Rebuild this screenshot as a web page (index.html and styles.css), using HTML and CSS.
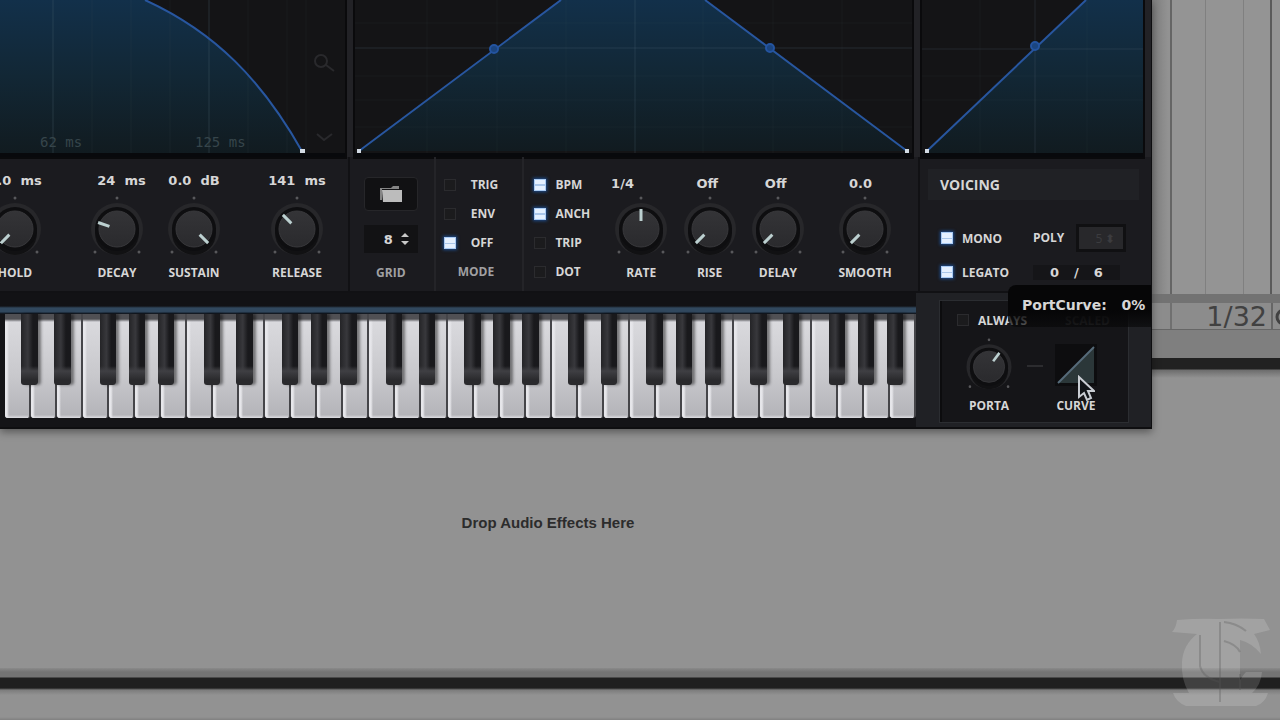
FILE: index.html
```html
<!DOCTYPE html>
<html lang="en">
<head>
  <meta charset="UTF-8" />
  <meta name="viewport" content="width=device-width, initial-scale=1.0" />
  <title>Synth</title>
  <link rel="stylesheet" href="styles.css">
</head>
<body>
  <!-- shared shapes -->
  <svg class="defs" width="0" height="0" aria-hidden="true">
    <defs>
      <linearGradient id="fill" x1="0" y1="0" x2="0" y2="1">
        <stop offset="0" stop-color="#12304a" />
        <stop offset="0.5" stop-color="#122735" />
        <stop offset="1" stop-color="#111b20" />
      </linearGradient>
      <linearGradient id="cap" x1="0" y1="0" x2="0" y2="1">
        <stop offset="0" stop-color="#343437" />
        <stop offset="1" stop-color="#2a2a2d" />
      </linearGradient>
      <symbol id="dial" viewBox="-30 -33 60 62">
        <circle r="26" fill="#27272a" />
        <circle cy="4" r="22" fill="#111113" />
        <circle r="22" fill="#0e0e10" />
        <circle r="18" fill="url(#cap)" stroke="#38383b" />
        <circle cy="-31" r="1.5" fill="#58585b" />
        <circle cx="-22" cy="23" r="1.5" fill="#58585b" />
        <circle cx="22" cy="23" r="1.5" fill="#58585b" />
      </symbol>
    </defs>
  </svg>

  <div class="workspace">
    <main class="plugin">
      <div class="displays">
        <svg class="display" viewBox="0 0 345 153" preserveAspectRatio="none">
          <path d="M0 0H145C215 32 262 80 303 153H0Z" fill="url(#fill)" />
          <path d="M53 0V153M209 0V153" stroke="#4b6470" stroke-opacity=".35" />
          <path d="M92 0V153M131 0V153M170 0V153M248 0V153M287 0V153M306 0V153" stroke="#4b6470" stroke-opacity=".1" />
          <path class="trace" d="M145 0C215 32 262 80 303 153" />
          <rect x="300" y="149" width="5" height="4" fill="#d3dbe4" />
          <g fill="none" stroke="#29292c" stroke-width="2">
            <circle cx="321" cy="61" r="6" />
            <path d="M326 65l8 6M317 134l7 6 8-6" />
          </g>
          <g class="ticks">
            <text x="40" y="147">62 ms</text>
            <text x="195" y="147">125 ms</text>
          </g>
        </svg>
        <svg class="display" viewBox="0 0 557 153" preserveAspectRatio="none">
          <path d="M4 151L206 0H350L552 151Z" fill="url(#fill)" />
          <path d="M0 48H557M280 0V153" stroke="#5d747e" stroke-opacity=".25" />
          <path d="M0 23H557M0 76H557M0 100H557M0 127H557M72 0V153M142 0V153M211 0V153M348 0V153M418 0V153M487 0V153" stroke="#5d747e" stroke-opacity=".07" />
          <path class="trace" d="M4 151L206 0M350 0L552 151" />
          <g class="handle">
            <circle cx="139" cy="49" r="4" />
            <circle cx="415" cy="48" r="4" />
          </g>
          <path d="M2 149h4v4h-4zM550 149h4v4h-4z" fill="#d3dbe4" />
        </svg>
        <svg class="display" viewBox="0 0 221 153" preserveAspectRatio="none">
          <path d="M5 151L164 0H221V153H5Z" fill="url(#fill)" />
          <path d="M0 49H221M113 0V153" stroke="#5d747e" stroke-opacity=".22" />
          <path d="M0 76H221M0 100H221M58 0V153M165 0V153" stroke="#5d747e" stroke-opacity=".07" />
          <path class="trace" d="M5 151L164 0" />
          <circle class="handle" cx="113" cy="46" r="4" />
          <path d="M3 149h4v4h-4z" fill="#d3dbe4" />
        </svg>
      </div>

      <div class="controls">
        <section class="envelope">
          <label class="knob"><span class="value">0.0  ms</span>
            <span class="dial"><svg><use href="#dial" /></svg><svg viewBox="-30 -33 60 62"><path class="needle" transform="rotate(-135)" d="M0-8V-20" /></svg><input type="range" value="0"></span>
            <span class="name">HOLD</span></label>
          <label class="knob"><span class="value">  24  ms</span>
            <span class="dial"><svg><use href="#dial" /></svg><svg viewBox="-30 -33 60 62"><path class="needle" transform="rotate(-71)" d="M0-8V-20" /></svg><input type="range" value="24"></span>
            <span class="name">DECAY</span></label>
          <label class="knob"><span class="value">0.0  dB</span>
            <span class="dial"><svg><use href="#dial" /></svg><svg viewBox="-30 -33 60 62"><path class="needle" transform="rotate(135)" d="M0-8V-20" /></svg><input type="range" value="100"></span>
            <span class="name">SUSTAIN</span></label>
          <label class="knob"><span class="value">141  ms</span>
            <span class="dial"><svg><use href="#dial" /></svg><svg viewBox="-30 -33 60 62"><path class="needle" transform="rotate(-45)" d="M0-8V-20" /></svg><input type="range" value="33"></span>
            <span class="name">RELEASE</span></label>
        </section>

        <section class="lfo">
          <div class="grid-size">
            <button class="folder" aria-label="Open shape">
              <svg width="24" height="18" viewBox="0 0 24 18"><path d="M1 3h11l2-2h6v3H3v11H1z" fill="#858585" /><path d="M3 5h20v12H4z" fill="#bcbcbc" /></svg>
            </button>
            <div class="stepper">
              <input id="grid" type="text" value="8">
              <svg width="10" height="16" viewBox="0 0 10 16" fill="#c8c8c8"><path d="M1 6l4-4 4 4zM1 10h8l-4 4z" /></svg>
            </div>
            <label class="name dim" for="grid">GRID</label>
          </div>
          <div class="mode">
            <label class="check"><input type="radio" name="mode">TRIG</label>
            <label class="check"><input type="radio" name="mode">ENV</label>
            <label class="check"><input type="radio" name="mode" checked>OFF</label>
            <span class="name dim">MODE</span>
          </div>
          <div class="sync">
            <label class="check"><input type="checkbox" checked>BPM</label>
            <label class="check"><input type="checkbox" checked>ANCH</label>
            <label class="check"><input type="checkbox">TRIP</label>
            <label class="check"><input type="checkbox">DOT</label>
          </div>
          <div class="lfo-knobs">
            <label class="knob"><span class="value start">1/4</span>
              <span class="dial"><svg><use href="#dial" /></svg><svg viewBox="-30 -33 60 62"><path class="needle" d="M0-8V-20" /></svg><input type="range" value="50"></span>
              <span class="name">RATE</span></label>
            <label class="knob"><span class="value">Off </span>
              <span class="dial"><svg><use href="#dial" /></svg><svg viewBox="-30 -33 60 62"><path class="needle" transform="rotate(-135)" d="M0-8V-20" /></svg><input type="range" value="0"></span>
              <span class="name">RISE</span></label>
            <label class="knob"><span class="value">Off </span>
              <span class="dial"><svg><use href="#dial" /></svg><svg viewBox="-30 -33 60 62"><path class="needle" transform="rotate(-135)" d="M0-8V-20" /></svg><input type="range" value="0"></span>
              <span class="name">DELAY</span></label>
            <label class="knob"><span class="value">0.0  </span>
              <span class="dial"><svg><use href="#dial" /></svg><svg viewBox="-30 -33 60 62"><path class="needle" transform="rotate(-135)" d="M0-8V-20" /></svg><input type="range" value="0"></span>
              <span class="name">SMOOTH</span></label>
          </div>
        </section>

        <section class="voicing">
          <h2>VOICING</h2>
          <div class="voice-row">
            <label class="check"><input type="checkbox" checked>MONO</label>
            <label class="name" for="poly">POLY</label>
            <input class="poly" id="poly" type="text" value="5 ⬍" disabled>
          </div>
          <div class="voice-row">
            <label class="check"><input type="checkbox" checked>LEGATO</label>
            <div class="voices"><span>0</span><span>/</span><span>6</span></div>
          </div>
        </section>
      </div>

      <div class="bottom">
        <div class="keyboard" id="keyboard"></div>
        <section class="porta">
          <div class="porta-top">
            <label class="check"><input type="checkbox">ALWAYS</label>
            <button class="scaled">SCALED</button>
          </div>
          <div class="porta-row">
            <label class="knob small">
              <span class="dial"><svg><use href="#dial" /></svg><svg viewBox="-30 -33 60 62"><path class="needle" transform="rotate(37)" d="M0-8V-20" /></svg><input type="range" value="63"></span>
              <span class="name">PORTA</span></label>
            <span class="link"></span>
            <button class="curve">
              <svg width="42" height="42" viewBox="0 0 42 42"><rect width="42" height="42" fill="#0d0d0f" /><path d="M3 39L39 3V39Z" fill="#2b3739" /><path d="M3 39L39 3" stroke="#566b7a" stroke-width="2" /></svg>
              <span class="name">CURVE</span>
            </button>
          </div>
          <div class="tooltip">PortCurve:   0%</div>
          <svg class="cursor" width="18" height="28" viewBox="0 0 18 28"><path d="M2 2V22L7 18L10 25L14 23L11 16H17Z" fill="#111418" stroke="#c9cdd3" stroke-width="2" /></svg>
        </section>
      </div>
    </main>

    <aside class="host">
      <div class="host-grid"></div>
      <div class="host-bar"></div>
      <div class="host-zoom">1/32
        <svg width="5" height="27" viewBox="0 0 5 27"><circle cx="9" cy="14" r="7" fill="none" stroke="#414141" stroke-width="3" /></svg>
      </div>
      <div class="host-foot"></div>
      <div class="host-rule"></div>
    </aside>
  </div>

  <div class="drop">Drop Audio Effects Here</div>

  <footer class="status">
    <svg class="mark" width="98" height="90" viewBox="0 0 98 90">
      <path fill="#fff" fill-opacity=".15" d="M0 14Q4 10 5 2Q28 0 47 1Q70 0 92 1L98 12L82 16Q88 24 89 36Q80 25 68 22V62Q72 56 74 54H90Q89 67 80 75H96Q93 85 84 88H14Q4 84 1 75H17Q9 62 10 44Q11 27 25 16Z" />
      <path fill="none" stroke="#555" stroke-opacity=".3" stroke-width="2" d="M48 4V84M28 17V48Q31 60 48 64M52 4Q64 5 74 13M52 23Q64 26 68 34M68 56V72" />
    </svg>
  </footer>

  <script src="script.js"></script>
</body>
</html>
```
FILE: styles.css
```css
* { box-sizing: border-box; }
body {
  margin: 0;
  min-height: 100vh;
  display: flex;
  flex-direction: column;
  overflow: hidden;
  background: #929292;
  color: #d6d6d6;
  font-family: "Open Sans", sans-serif;
  font-size: 12px;
}
button, input {
  font: inherit;
  color: inherit;
  margin: 0;
  padding: 0;
  border: none;
  background: none;
}
.defs { position: absolute; }
.workspace { display: flex; }

/* plugin window */
.plugin {
  flex: 0 0 90%;
  min-width: 0;
  position: relative;
  z-index: 1;
  overflow: hidden;
  background: #1b1b1f;
  border-bottom: 2px solid #0e0e10;
  border-right: 1px solid #0e0e10;
  box-shadow: 0 3px 8px rgba(0, 0, 0, 0.4);
}
.displays {
  display: grid;
  grid-template-columns: 345fr 557fr 221fr;
  gap: 10px;
  padding-right: 8px;
  background: #222226;
}
.display {
  width: 100%;
  height: 157px;
  background: #141416;
  border-bottom: 4px solid #08090c;
  outline: 2px solid #0a0a0c;
}
.trace {
  fill: none;
  stroke: #28569f;
  stroke-width: 2;
}
.handle {
  fill: #1b4580;
  stroke: #2454a0;
  stroke-width: 2;
}
.ticks {
  fill: #36454b;
  font-family: "DejaVu Sans Mono", monospace;
  font-size: 14px;
}
.controls {
  display: grid;
  grid-template-columns: 348fr 570fr 233fr;
  height: 136px;
  border-bottom: 2px solid #111114;
}
.controls > section + section { border-left: 2px solid #111114; }

.envelope {
  display: grid;
  grid-template-columns: 154fr 50fr 104fr 102fr;
  margin-left: -62px;
  padding-top: 14px;
}
.knob {
  display: flex;
  flex-direction: column;
  align-items: center;
  min-width: 0;
}
.value {
  height: 20px;
  margin-bottom: 5px;
  line-height: 20px;
  white-space: pre;
  font-family: "DejaVu Sans", sans-serif;
  font-size: 13px;
  font-weight: bold;
}
.value.start {
  align-self: flex-start;
  padding-left: 4px;
}
.dial {
  display: grid;
  width: 60px;
  height: 62px;
}
.dial > * {
  grid-area: 1 / 1;
  width: 100%;
  height: 100%;
}
.dial input { opacity: 0; }
.needle {
  stroke: #bcd0d0;
  stroke-width: 3;
}
.name {
  height: 16px;
  margin-top: 7px;
  line-height: 16px;
  font-weight: bold;
}
.dim { color: #a0a0a2; }

.lfo {
  display: grid;
  grid-template-columns: 84fr 89fr 85fr 312fr;
}
.lfo > div + div { border-left: 2px solid #242428; }
.lfo > .lfo-knobs { border-left: none; }
.grid-size {
  display: flex;
  flex-direction: column;
  align-items: center;
  padding: 20px 2px 0 0;
}
.folder {
  display: flex;
  align-items: center;
  justify-content: center;
  width: 54px;
  height: 34px;
  background: #111113;
  border: 1px solid #262629;
  border-radius: 4px;
}
.stepper {
  display: flex;
  align-items: center;
  justify-content: flex-end;
  gap: 4px;
  width: 54px;
  height: 28px;
  margin-top: 14px;
  padding-right: 8px;
  background: #121214;
}
.stepper input {
  width: 12px;
  font-family: "DejaVu Sans", sans-serif;
  font-size: 13px;
  font-weight: bold;
}
.grid-size .name { margin-top: 12px; }
.mode, .sync {
  display: flex;
  flex-direction: column;
  padding: 13px 0 0 10px;
}
.mode { padding-left: 8px; }
.check {
  display: flex;
  align-items: center;
  height: 29px;
  gap: 9px;
  font-weight: bold;
}
.mode .check { gap: 15px; }
.mode .name { padding-left: 14px; }
.check input {
  appearance: none;
  width: 12px;
  height: 12px;
  background: #1b1b1d;
  border: 1px solid #2b2b2e;
}
.check input:checked {
  background: linear-gradient(#e4f0ff 45%, #a9c6ea 45% 60%, #e4f0ff 60%);
  border-color: #a9cbf5;
  box-shadow: 0 0 3px 1px #1d4c8d;
}
.lfo-knobs {
  display: grid;
  grid-template-columns: 69fr 69fr 69fr 107fr;
  padding-top: 17px;
}
.lfo-knobs .value { margin-bottom: 2px; }

.voicing { padding: 12px 12px 0 8px; }
.voicing h2 {
  margin: 0 0 21px;
  padding-left: 12px;
  height: 31px;
  line-height: 31px;
  font-size: 14px;
  background: #202125;
}
.voice-row {
  display: flex;
  align-items: center;
  height: 34px;
  padding-left: 13px;
}
.voice-row .check { width: 92px; }
.voice-row .name { margin: 0; }
.poly {
  width: 50px;
  height: 28px;
  margin-left: 12px;
  padding-right: 8px;
  text-align: right;
  color: #3c3c3f;
  background: #28282b;
  border: 3px solid #101012;
}
.voices {
  display: flex;
  gap: 15px;
  padding: 0 17px;
  font-family: "DejaVu Sans", sans-serif;
  font-size: 13px;
  font-weight: bold;
  background: #151518;
}

/* keyboard and portamento */
.bottom {
  display: grid;
  grid-template-columns: 916fr 235fr;
  background: #202125;
}
.keyboard {
  display: flex;
  height: 134px;
  padding: 21px 0 9px 5px;
  background: linear-gradient(#121215 13px, #31485e 15px 19px, #14202e 20px, #141417 21px);
}
.octave {
  flex: 1;
  display: flex;
  position: relative;
}
.white {
  flex: 1;
  border-right: 2px solid #454549;
  border-radius: 0 0 3px 3px;
  background: linear-gradient(#505054 5px, transparent 8px), linear-gradient(90deg, #e6e6ea 2px, transparent 4px), linear-gradient(#dcdce0, #c8c8cc 60%, #b4b4b9 97%, #dedee2);
}
.black {
  position: absolute;
  top: 0;
  width: 9%;
  height: 68%;
  background: linear-gradient(transparent 52px, #3f3f43 57px, #2a2a2d 66px), linear-gradient(90deg, #242427, #38383c 40%, #19191c 70%);
  border-radius: 0 0 3px 3px;
  box-shadow: 3px 0 3px rgba(0, 0, 0, 0.45);
}
.black:nth-of-type(8) { left: 9%; }
.black:nth-of-type(9) { left: 27%; }
.black:nth-of-type(10) { left: 52%; }
.black:nth-of-type(11) { left: 68%; }
.black:nth-of-type(12) { left: 84%; }
.porta {
  position: relative;
  margin: 8px 23px 5px 24px;
  padding: 4px 15px 0;
  background: #151518;
  border-left: 2px solid #0c0c0e;
  outline: 1px solid #2b2d31;
}
.porta-top {
  display: flex;
  justify-content: space-between;
  height: 31px;
}
.porta-top .check { height: 30px; }
.scaled {
  font-weight: bold;
  color: #39393b;
  padding-right: 3px;
}
.porta-row {
  display: flex;
  justify-content: space-between;
  align-items: flex-start;
}
.small { padding-left: 6px; }
.small .dial {
  width: 52px;
  height: 58px;
}
.small .name { margin-top: 4px; }
.link {
  width: 16px;
  height: 2px;
  margin-top: 29px;
  background: #2c2c2f;
}
.curve {
  display: flex;
  flex-direction: column;
  align-items: center;
  padding: 8px 16px 0 0;
}
.curve .name { margin-top: 12px; }
.tooltip {
  position: absolute;
  top: -16px;
  left: 66px;
  padding: 0 14px;
  height: 42px;
  line-height: 40px;
  white-space: pre;
  font-family: "DejaVu Sans", sans-serif;
  font-size: 14px;
  font-weight: bold;
  background: linear-gradient(#060607 60%, rgba(6, 6, 7, 0.6));
  border-radius: 8px;
}
.cursor {
  position: absolute;
  top: 74px;
  left: 135px;
}

/* host application behind the plugin */
.host {
  flex: 1;
  color: #414141;
}
.host-grid {
  height: 294px;
  background: linear-gradient(90deg, #7d7d7d, #929292 16px, #929292 18px, #656565 18px 20px, #949494 20px 53px, #808080 53px 54px, #949494 54px 91px, #808080 91px 92px, #949494 92px 118px, #5a5a5a 118px 120px, #949494 120px);
}
.host-bar {
  height: 9px;
  background: #727272;
}
.host-zoom {
  display: flex;
  justify-content: flex-end;
  gap: 8px;
  height: 27px;
  line-height: 27px;
  font-family: "DejaVu Sans", sans-serif;
  font-size: 27px;
  background: linear-gradient(90deg, #8c8c8c 18px, #707070 18px 20px, #8c8c8c 20px 119px, #666 119px 121px, #8c8c8c 121px);
  border-bottom: 1px solid #666;
}
.host-foot {
  height: 28px;
  background: #7f7f7f;
}
.host-rule {
  height: 20px;
  background: linear-gradient(#212121 11px, #6c6c6c 12px, #929292);
}
.drop {
  flex: 1;
  display: flex;
  justify-content: center;
  padding: 85px 184px 0 0;
  color: #2c2c2c;
  font-family: "Liberation Sans", sans-serif;
  font-size: 15px;
  font-weight: bold;
}
.status {
  position: relative;
  height: 52px;
  background: linear-gradient(#8a8a8a, #737373 4px 9px, #1f1f1f 10px 20px, #7c7c7c 22px, #929292 27px 49px, #808080);
}
.mark {
  position: absolute;
  right: 10px;
  bottom: 12px;
}
```
FILE: script.js
```js
const keyboard = document.getElementById("keyboard");

for (let i = 0; i < 5; i++) {
  const octave = document.createElement("div");
  octave.className = "octave";
  for (let k = 0; k < 12; k++) {
    const key = document.createElement("button");
    key.className = k < 7 ? "white" : "black";
    octave.appendChild(key);
  }
  keyboard.appendChild(octave);
}
```
